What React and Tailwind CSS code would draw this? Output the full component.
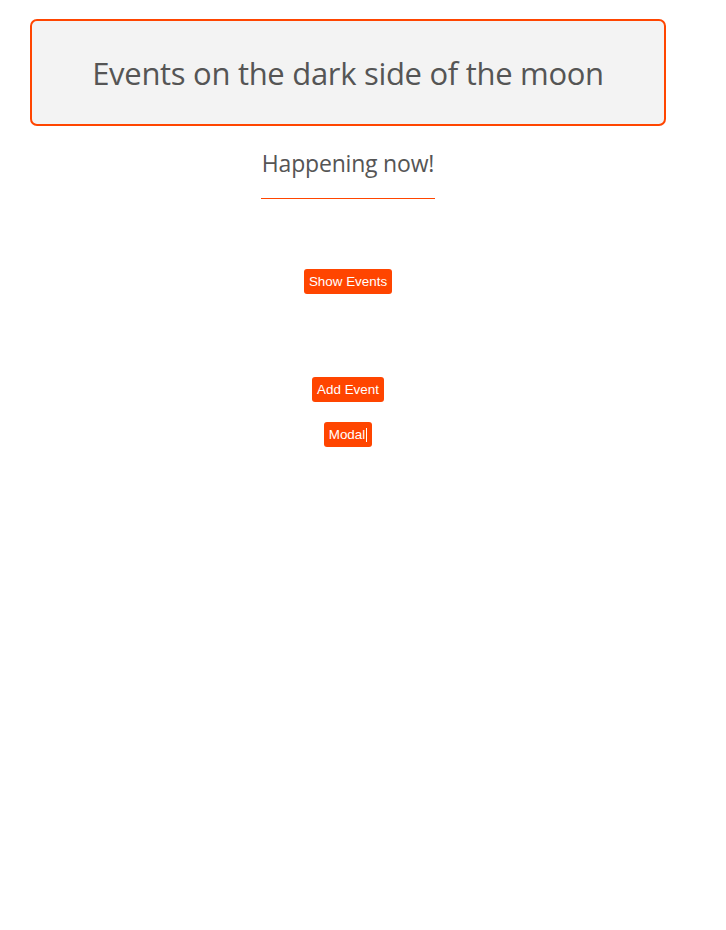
export default function App() {
  const btnFont = { fontFamily: '"Liberation Sans", Arial, sans-serif' };
  return (
    <div className="w-[726px] h-[930px] bg-white" style={{ fontFamily: '"Open Sans", "Noto Sans", sans-serif' }}>
      <div className="w-[696px] flex flex-col items-center">
        <div className="self-start mt-[19px] ml-[30px] w-[636px] h-[107px] border-2 border-[#ff4500] rounded-[7px] bg-[#f3f3f3] flex items-center justify-center">
          <h1 className="text-[31px] font-normal text-[#555] leading-none tracking-[-0.3px] mt-[1px]">Events on the dark side of the moon</h1>
        </div>
        <div className="mt-[21px] border-b border-b-[#ff4500] pb-[19px] px-[1px]">
          <h2 className="text-[23px] font-normal text-[#555] leading-[32px] tracking-[-0.2px]">Happening now!</h2>
        </div>
        <button className="mt-[70px] h-[25px] px-[5px] rounded-[3px] bg-[#ff4500] text-white text-[13.4px] leading-none" style={btnFont}>Show Events</button>
        <button className="mt-[83px] h-[25px] px-[5px] rounded-[3px] bg-[#ff4500] text-white text-[13.4px] leading-none" style={btnFont}>Add Event</button>
        <button className="mt-[20px] h-[25px] px-[5px] rounded-[3px] bg-[#ff4500] text-white text-[13.4px] leading-none flex items-center" style={btnFont}>Modal<span className="inline-block w-[1px] h-[14px] bg-white ml-[1px]"></span></button>
      </div>
    </div>
  );
}
